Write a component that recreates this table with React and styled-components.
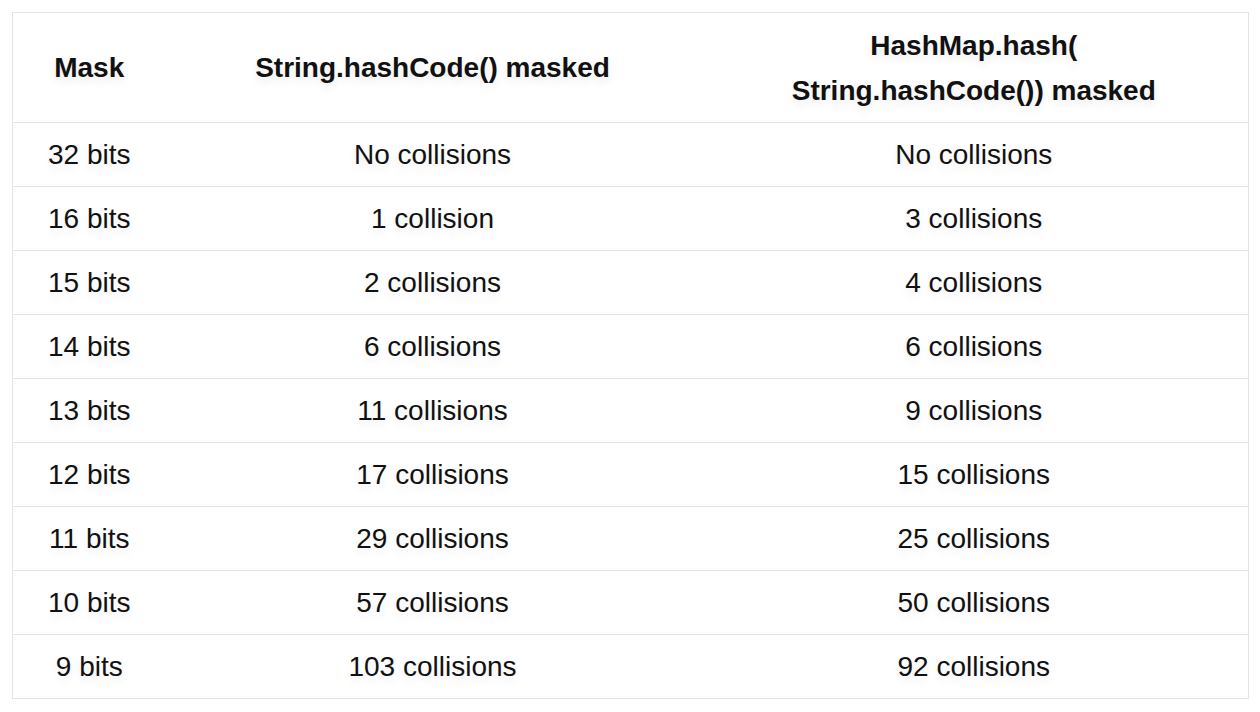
import React from 'react'
import { styled, createGlobalStyle } from 'styled-components';

const rows = [
  ['32 bits', 'No collisions', 'No collisions'],
  ['16 bits', '1 collision', '3 collisions'],
  ['15 bits', '2 collisions', '4 collisions'],
  ['14 bits', '6 collisions', '6 collisions'],
  ['13 bits', '11 collisions', '9 collisions'],
  ['12 bits', '17 collisions', '15 collisions'],
  ['11 bits', '29 collisions', '25 collisions'],
  ['10 bits', '57 collisions', '50 collisions'],
  ['9 bits', '103 collisions', '92 collisions'],
];

export default function App() {
  return (
    <>
      <GlobalStyle />
      <Page>
        <Table>
          <colgroup>
            <col style={{ width: 153 }} />
            <col style={{ width: 534 }} />
            <col style={{ width: 549 }} />
          </colgroup>
          <thead>
            <HeadRow>
              <Th>Mask</Th>
              <Th>String.hashCode() masked</Th>
              <Th>HashMap.hash(<br />String.hashCode()) masked</Th>
            </HeadRow>
          </thead>
          <tbody>
            {rows.map((r) => (
              <Row key={r[0]}>
                {r.map((c, i) => (
                  <Td key={i}>{c}</Td>
                ))}
              </Row>
            ))}
          </tbody>
        </Table>
      </Page>
    </>
  );
}

const GlobalStyle = createGlobalStyle`
  body {
    margin: 0;
    background: #fff;
    font-family: "Liberation Sans", Arial, sans-serif;
    color: #111;
  }
`;

const Page = styled.div`
  padding: 12px 12px 0 12px;
`;

const Table = styled.table`
  width: 1237px;
  border-collapse: collapse;
  table-layout: fixed;
  border: 1.5px solid #e4e4e4;
`;

const HeadRow = styled.tr`
  height: 110px;
`;

const Row = styled.tr`
  height: 64px;
`;

const Th = styled.th`
  padding: 0 4px;
  font-size: 28px;
  font-weight: 700;
  line-height: 45px;
  text-align: center;
  border-bottom: 1.5px solid #e4e4e4;
  text-shadow: 0 5px 8px rgba(0, 0, 0, 0.08);
`;

const Td = styled.td`
  padding: 0 4px;
  font-size: 28px;
  text-align: center;
  border-bottom: 1.5px solid #e4e4e4;
  text-shadow: 0 5px 8px rgba(0, 0, 0, 0.08);
`;
